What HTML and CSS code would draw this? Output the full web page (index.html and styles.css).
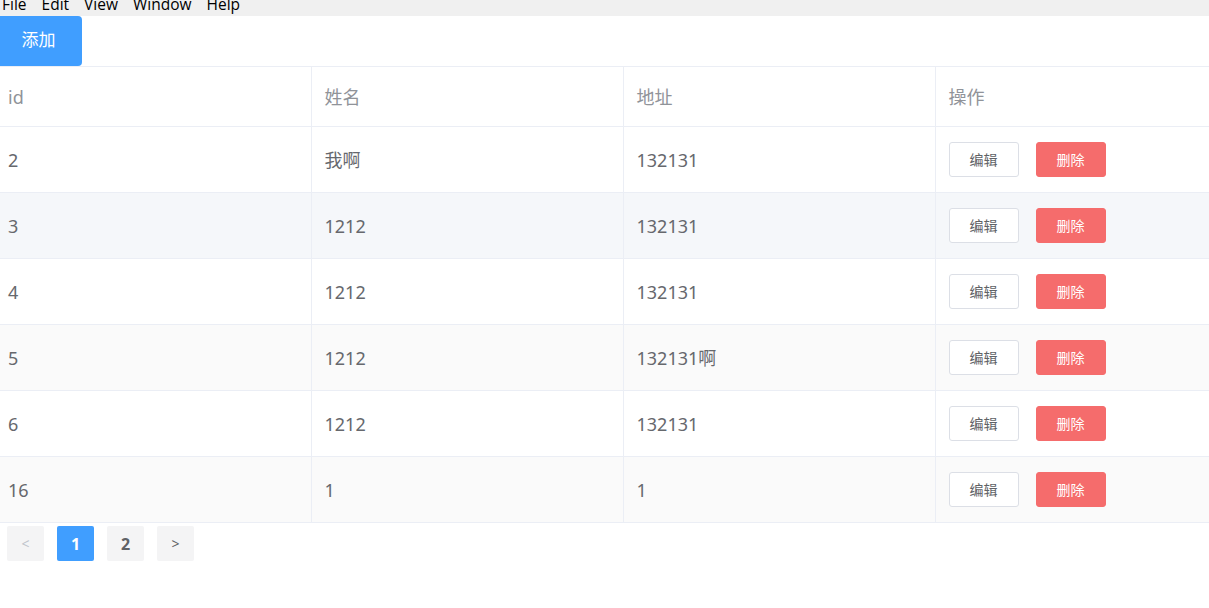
FILE: index.html
```html
<!DOCTYPE html>
<html lang="zh">
<head>
<meta charset="utf-8">
<link rel="stylesheet" href="styles.css">
</head>
<body>
<div class="menubar">
  <span class="mi">File</span>
  <span class="mi">Edit</span>
  <span class="mi">View</span>
  <span class="mi">Window</span>
  <span class="mi">Help</span>
</div>
<div class="toolbar"><button class="btn-add">添加</button></div>
<table class="grid">
  <colgroup><col class="c1"><col class="c2"><col class="c3"><col class="c4"></colgroup>
  <thead>
    <tr><th class="first">id</th><th>姓名</th><th>地址</th><th>操作</th></tr>
  </thead>
  <tbody>
    <tr><td class="first">2</td><td>我啊</td><td>132131</td><td><span class="ops"><button class="b-edit">编辑</button><button class="b-del">删除</button></span></td></tr>
    <tr class="hover"><td class="first">3</td><td>1212</td><td>132131</td><td><span class="ops"><button class="b-edit">编辑</button><button class="b-del">删除</button></span></td></tr>
    <tr><td class="first">4</td><td>1212</td><td>132131</td><td><span class="ops"><button class="b-edit">编辑</button><button class="b-del">删除</button></span></td></tr>
    <tr class="stripe"><td class="first">5</td><td>1212</td><td>132131啊</td><td><span class="ops"><button class="b-edit">编辑</button><button class="b-del">删除</button></span></td></tr>
    <tr><td class="first">6</td><td>1212</td><td>132131</td><td><span class="ops"><button class="b-edit">编辑</button><button class="b-del">删除</button></span></td></tr>
    <tr class="stripe"><td class="first">16</td><td>1</td><td>1</td><td><span class="ops"><button class="b-edit">编辑</button><button class="b-del">删除</button></span></td></tr>
  </tbody>
</table>
<div class="pager">
  <button class="pg prev">&lt;</button>
  <button class="pg active">1</button>
  <button class="pg">2</button>
  <button class="pg next">&gt;</button>
</div>
</body>
</html>
```
FILE: styles.css
```css
html, body { margin: 0; padding: 0; background: #fff; }
body { font-family: "Noto Sans", "Noto Sans CJK SC", sans-serif; color: #606266; }
button { font-family: "Noto Sans", "Noto Sans CJK SC", sans-serif; cursor: pointer; }

.menubar {
  height: 16px; background: #f0f0f0; overflow: hidden;
  display: flex; align-items: flex-start; gap: 15px; padding-left: 2px;
  font-family: "Open Sans", "Liberation Sans", sans-serif; font-size: 15.5px; color: #000;
}
.mi { line-height: 18px; margin-top: -5px; }

.toolbar { height: 50px; }
.btn-add {
  width: 82px; height: 50px; border: 0; background: #409eff; color: #fff;
  font-size: 17px; border-radius: 0 4px 4px 0; padding: 0 5px 5px 0;
}

.grid {
  width: 1209px; border-collapse: collapse; table-layout: fixed;
  border-top: 1px solid #ebeef5;
}
.c1 { width: 311px; } .c2 { width: 312px; } .c3 { width: 312px; } .c4 { width: 274px; }
.grid th, .grid td {
  text-align: left; border-bottom: 1px solid #ebeef5; border-right: 1px solid #ebeef5;
  padding: 0 0 0 13px; font-size: 18px; font-weight: normal; line-height: 24px;
}
.grid th:last-child, .grid td:last-child { border-right: 0; }
.grid th { height: 59px; color: #909399; }
.grid td { height: 65px; color: #66686d; }
.grid .first { padding-left: 8px; }
.grid tr.hover td { background: #f5f7fa; }
.grid tr.stripe td { background: #fafafa; }

.ops { display: flex; gap: 17px; align-items: center; }
.b-edit, .b-del {
  width: 70px; height: 35px; border-radius: 3px; font-size: 14px; padding: 0; line-height: 33px;
}
.b-edit { background: #fff; border: 1px solid #dcdfe6; color: #606266; }
.b-del { background: #f56c6c; border: 1px solid #f56c6c; color: #fff; }

.pager { display: flex; gap: 13px; padding: 3px 0 0 7px; }
.pg {
  width: 37px; height: 35px; border: 0; border-radius: 2px; background: #f4f4f5;
  color: #606266; font-weight: bold; font-size: 16px; padding: 0;
}
.pg.prev { color: #c0c4cc; font-weight: normal; font-size: 14px; }
.pg.next { font-weight: normal; font-size: 14px; }
.pg.active { background: #409eff; color: #fff; }
```
